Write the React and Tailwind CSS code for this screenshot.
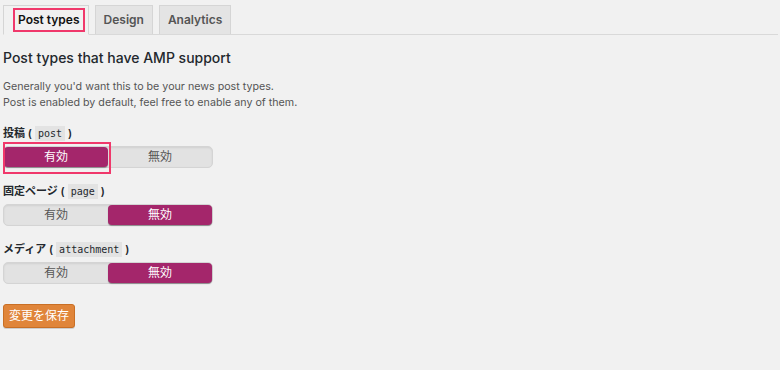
const font = { fontFamily: 'Inter, "Noto Sans CJK JP", sans-serif' };

const Toggle = ({ on, highlight }) => {
  const active = 'bg-[#a4266b] text-white shadow-[0_1px_1px_rgba(0,0,0,0.35)] rounded-[4px]';
  const idle = 'text-[#555]';
  return (
    <div className="relative w-[210px] h-[22px]">
      <div className="flex w-full h-full rounded-[5px] bg-[#e2e2e2] border border-[#d4d4d4] shadow-[inset_0_1px_2px_rgba(0,0,0,0.08)] text-[12px]">
        <div className={`flex-1 flex items-center justify-center ${on ? active : idle}`}>有効</div>
        <div className={`flex-1 flex items-center justify-center ${!on ? active : idle}`}>無効</div>
      </div>
      {highlight && (
        <div className="absolute left-0 top-[-4px] w-[108px] h-[32px] border-2 border-[#f0386b]"></div>
      )}
    </div>
  );
};

const Field = ({ label, code, on, highlight }) => (
  <div className="mb-[15px]">
    <div className="h-[16px] flex items-center text-[11px] font-semibold text-[#23282d] mb-[5px]">
      {label} (
      <code className="mx-[3px] px-[3px] bg-[#e3e3e3] text-[10px] font-normal text-[#23282d]" style={{ fontFamily: '"DejaVu Sans Mono", monospace' }}>
        {code}
      </code>
      )
    </div>
    <Toggle on={on} highlight={highlight} />
  </div>
);

export default function App() {
  return (
    <div className="w-[780px] h-[370px] bg-[#f1f1f1] overflow-hidden" style={font}>
      <div className="pl-[3px] pr-[2px] pt-[5px]">
        <div className="flex items-end gap-[6px] border-b border-[#d9d9d9] h-[30px]">
          <div className="h-[30px] -mb-px bg-[#f1f1f1] border border-[#d5d5d5] border-b-[#f1f1f1] pl-[9px] pr-[3px] pt-[2px]">
            <div className="h-[24px] px-[3px] border-2 border-[#f0386b] flex items-center text-[12px] font-semibold text-[#111]">
              Post types
            </div>
          </div>
          <div className="h-[29px] bg-[#e4e4e4] border border-[#d5d5d5] border-b-0 px-[8px] flex items-center text-[12px] font-semibold text-[#555]">
            Design
          </div>
          <div className="h-[29px] bg-[#e4e4e4] border border-[#d5d5d5] border-b-0 px-[8px] flex items-center text-[12px] font-semibold text-[#555]">
            Analytics
          </div>
        </div>

        <h2 className="mt-[12px] text-[14px] leading-[22px] font-medium text-[#23282d]">Post types that have AMP support</h2>

        <p className="mt-[10px] text-[10.7px] leading-[16px] text-[#555]">
          Generally you'd want this to be your news post types.
          <br />
          Post is enabled by default, feel free to enable any of them.
        </p>

        <div className="mt-[14px]">
          <Field label="投稿" code="post" on={true} highlight />
          <Field label="固定ページ" code="page" on={false} />
          <Field label="メディア" code="attachment" on={false} />
        </div>

        <button className="mt-[5px] h-[24px] px-[5px] bg-[#e0853a] border border-[#c96f25] rounded-[3px] text-white text-[12px] shadow-[0_1px_0_rgba(0,0,0,0.15)]">
          変更を保存
        </button>
      </div>
    </div>
  );
}
